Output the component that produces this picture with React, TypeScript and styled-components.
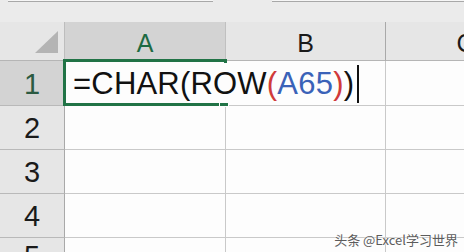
import React from 'react';
import styled, { createGlobalStyle } from 'styled-components';

const GlobalStyle = createGlobalStyle`
  html, body {
    margin: 0;
    padding: 0;
    background: #fdfdfd;
    overflow: hidden;
  }
  body {
    font-family: "Liberation Sans", Arial, sans-serif;
  }
`;

const Sheet = styled.div`
  position: relative;
  width: 464px;
  height: 252px;
  display: grid;
  grid-template-columns: 65px 161px 160px 160px;
  grid-template-rows: 22px 39px 45px 44px 44px 44px 1fr;
  background: #fdfdfd;
  overflow: hidden;
`;

const TopStrip = styled.div`
  grid-column: 1 / -1;
  display: grid;
  grid-template-columns: 8px 205px 59px 1fr;
  background: #ebebeb;
`;

const BarEdge = styled.div`
  height: 1px;
  background: #f6f6f6;
  border-bottom: 1px solid #a8a8a8;
`;

const Corner = styled.div`
  background: #e6e6e6;
  border-right: 1px solid #bdbdbd;
  border-bottom: 1px solid #b5b5b5;
  display: flex;
  align-items: flex-end;
  justify-content: flex-end;
  padding: 0 6px 7px 0;
`;

const ColHead = styled.div<{ $active?: boolean }>`
  background: ${p => (p.$active ? '#d3d3d3' : '#e6e6e6')};
  border-right: 1px solid ${p => (p.$active ? '#c0c0c0' : '#a9a9a9')};
  border-bottom: 1px solid ${p => (p.$active ? '#217346' : '#b5b5b5')};
  box-shadow: ${p => (p.$active ? 'inset 0 -1px 0 #217346' : 'none')};
  color: ${p => (p.$active ? '#1d6a42' : '#1a1a1a')};
  font-size: 25px;
  display: flex;
  justify-content: center;
  align-items: center;
  padding-top: 5px;
  box-sizing: border-box;
  white-space: nowrap;
  overflow: hidden;
`;

const RowHead = styled.div<{ $active?: boolean }>`
  background: ${p => (p.$active ? '#d3d3d3' : '#e6e6e6')};
  border-right: 1px solid #a9a9a9;
  border-bottom: 1px solid #b9b9b9;
  color: ${p => (p.$active ? '#2b5a42' : '#1a1a1a')};
  font-size: 29px;
  display: flex;
  justify-content: center;
  align-items: center;
  padding-top: 2px;
  box-sizing: border-box;
`;

const Cell = styled.div<{ $selected?: boolean }>`
  position: relative;
  z-index: ${p => (p.$selected ? 2 : 0)};
  background: #fdfdfd;
  border-right: 1px solid #c9c9c9;
  border-bottom: 1px solid #c9c9c9;
  display: flex;
  align-items: center;
  padding-left: 8px;
  box-sizing: border-box;
`;

const Formula = styled.div`
  position: relative;
  z-index: 1;
  display: flex;
  align-items: center;
  height: 40px;
  white-space: nowrap;
  font-size: 31px;
  color: #111;
  letter-spacing: 0.2px;
  padding-top: 2px;
  padding-right: 4px;
  box-sizing: border-box;
  background: #fdfdfd;
`;

const Tok = styled.span<{ $c: string }>`
  color: ${p => p.$c};
`;

const Caret = styled.span`
  display: inline-block;
  width: 2px;
  height: 38px;
  margin-left: 3px;
  background: #111;
`;

const SelectBox = styled.div`
  position: absolute;
  left: -2px;
  top: -2px;
  right: -2px;
  bottom: -1px;
  border: 3px solid #217346;
  pointer-events: none;
`;

const FillHandle = styled.div`
  position: absolute;
  right: -5px;
  bottom: -4px;
  width: 8px;
  height: 5px;
  background: #217346;
  border: 1px solid #fdfdfd;
`;

const Watermark = styled.div`
  position: absolute;
  right: 6px;
  bottom: 3px;
  font-family: "Noto Sans CJK SC", "Liberation Sans", sans-serif;
  font-size: 13px;
  color: #5c5c5c;
  text-shadow: 0 0 2px #fff, 0 0 2px #fff;
`;

const Triangle = () => (
  <svg width="23" height="22" viewBox="0 0 23 22">
    <polygon points="0,22 23,0 23,22" fill="#b4b4b4" />
  </svg>
);

const rows = [1, 2, 3, 4, 5];

const App: React.FC = () => (
  <>
    <GlobalStyle />
    <Sheet>
      <TopStrip>
        <div />
        <BarEdge />
        <div />
        <BarEdge />
      </TopStrip>

      <Corner>
        <Triangle />
      </Corner>
      <ColHead $active>A</ColHead>
      <ColHead>B</ColHead>
      <ColHead>C</ColHead>

      {rows.map(r => (
        <React.Fragment key={r}>
          <RowHead $active={r === 1}>{r}</RowHead>
          {r === 1 ? (
            <Cell $selected>
              <SelectBox>
                <FillHandle />
              </SelectBox>
              <Formula>
                =CHAR(ROW<Tok $c="#d03a3a">(</Tok>
                <Tok $c="#3a62b8">A65</Tok>
                <Tok $c="#d03a3a">)</Tok>)
                <Caret />
              </Formula>
            </Cell>
          ) : (
            <Cell />
          )}
          <Cell />
          <Cell />
        </React.Fragment>
      ))}
      <Watermark>头条 @Excel学习世界</Watermark>
    </Sheet>
  </>
);

export default App;
